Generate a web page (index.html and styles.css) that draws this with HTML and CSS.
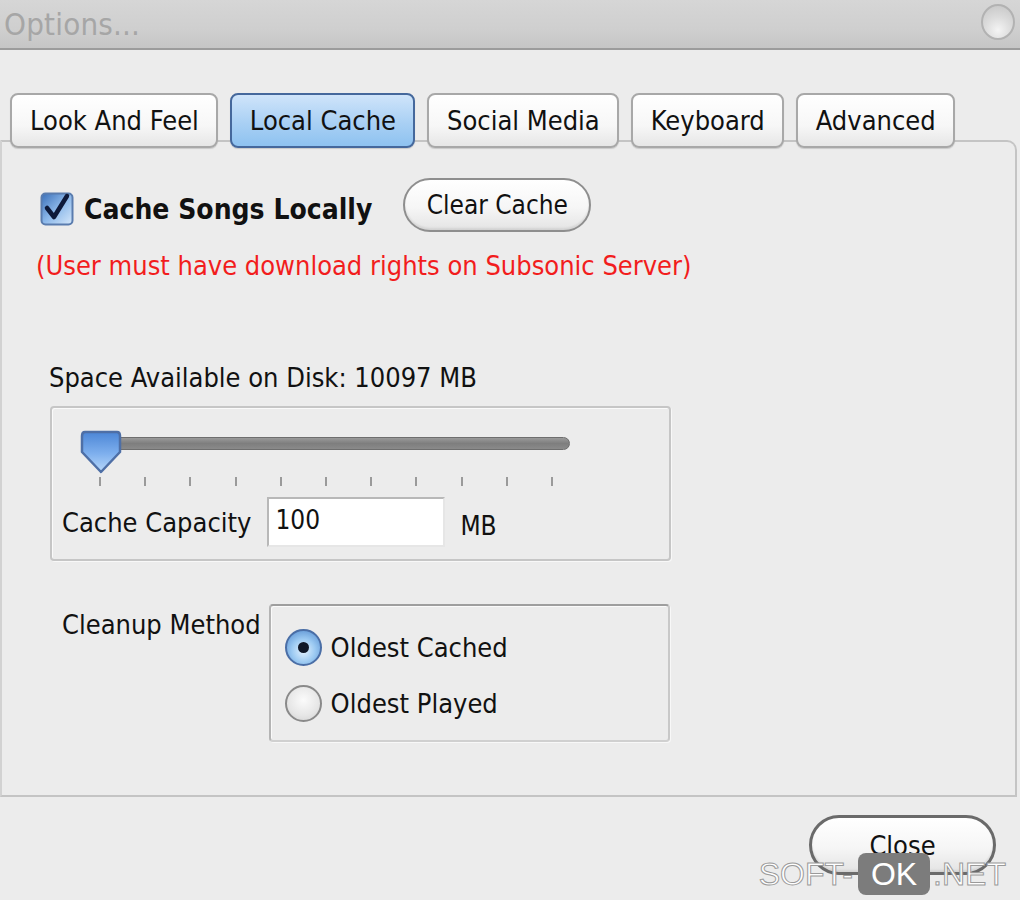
FILE: index.html
```html
<!DOCTYPE html>
<html>
<head>
<meta charset="utf-8">
<link rel="stylesheet" href="styles.css">
</head>
<body>
<div class="window">
  <div class="titlebar">
    <span class="title">Options...</span>
    <span class="orb"></span>
  </div>
  <div class="tabs">
    <div class="tab">Look And Feel</div>
    <div class="tab active">Local Cache</div>
    <div class="tab">Social Media</div>
    <div class="tab">Keyboard</div>
    <div class="tab">Advanced</div>
  </div>
  <div class="panel">
    <div class="cache-row">
      <span class="checkbox">
        <svg width="34" height="34" viewBox="0 0 34 34">
          <defs>
            <linearGradient id="cbg" x1="0" y1="0" x2="1" y2="1">
              <stop offset="0" stop-color="#3a6fb8"/>
              <stop offset="0.5" stop-color="#8cb8ea"/>
              <stop offset="1" stop-color="#d6e8fa"/>
            </linearGradient>
          </defs>
          <rect x="1.5" y="1.5" width="31" height="31" rx="4" fill="url(#cbg)" stroke="#5a7cae" stroke-width="2"/>
          <path d="M7 16 L14 25 L27 4" fill="none" stroke="#0e1a3a" stroke-width="4.5" stroke-linecap="round" stroke-linejoin="round"/>
        </svg>
      </span>
      <span class="cache-label">Cache Songs Locally</span>
      <button class="pill clear">Clear Cache</button>
    </div>
    <div class="warning">(User must have download rights on Subsonic Server)</div>

    <div class="space">Space Available on Disk: 10097 MB</div>
    <div class="box slider-box">
      <div class="slider">
        <div class="track"></div>
        <svg class="thumb" width="42" height="44" viewBox="0 0 42 44">
          <defs>
            <linearGradient id="tg" x1="0" y1="0" x2="0" y2="1">
              <stop offset="0" stop-color="#4c86d6"/>
              <stop offset="0.55" stop-color="#7fb0ee"/>
              <stop offset="1" stop-color="#b8d8fa"/>
            </linearGradient>
          </defs>
          <path d="M5 2 H37 Q40 2 40 6 V22 L21 42 L2 22 V6 Q2 2 5 2 Z" fill="url(#tg)" stroke="#4e6fa6" stroke-width="2.5" stroke-linejoin="round"/>
        </svg>
      </div>
      <div class="ticks">
        <i></i><i></i><i></i><i></i><i></i><i></i><i></i><i></i><i></i><i></i><i></i>
      </div>
      <div class="capacity-row">
        <span class="label">Cache Capacity</span>
        <span class="input">100</span>
        <span class="unit">MB</span>
      </div>
    </div>

    <div class="cleanup">
      <span class="label cleanup-label">Cleanup Method</span>
      <div class="box radio-box">
        <div class="radio-row">
          <span class="radio on"><span class="dot"></span></span>
          <span>Oldest Cached</span>
        </div>
        <div class="radio-row">
          <span class="radio"></span>
          <span>Oldest Played</span>
        </div>
      </div>
    </div>
  </div>
  <div class="footer">
    <button class="pill close">Close</button>
  </div>
  <div class="watermark"><span class="wm-t">SOFT-</span><span class="wm-ok">OK</span><span class="wm-t">.NET</span></div>
</div>
</body>
</html>
```
FILE: styles.css
```css
* { box-sizing: border-box; }
html, body { margin: 0; padding: 0; }
body {
  width: 1020px;
  height: 900px;
  overflow: hidden;
  background: #ececec;
  font-family: "DejaVu Sans Condensed", "DejaVu Sans", sans-serif;
  color: #111;
}
.window { position: relative; width: 1020px; height: 900px; }
.titlebar {
  height: 50px;
  background: linear-gradient(#d6d6d6, #cfcfcf 60%, #c6c6c6);
  border-bottom: 2px solid #9c9c9c;
  display: flex;
  align-items: center;
  justify-content: space-between;
  padding: 0 5px 0 4px;
}
.title {
  font-size: 31px;
  color: #a6a6a6;
  letter-spacing: 0.2px;
}
.orb {
  width: 34px;
  height: 36px;
  border-radius: 50%;
  border: 2px solid #b2b2b2;
  background: radial-gradient(circle at 50% 75%, #f4f4f4 0, #dcdcdc 45%, #c4c4c4 100%);
  margin-top: -4px;
}
.tabs {
  display: flex;
  gap: 12px;
  margin: 43px 0 0 10px;
  position: relative;
  z-index: 2;
}
.tab {
  height: 55px;
  padding: 0 17px 0 18px;
  display: flex;
  align-items: center;
  font-size: 27px;
  border: 2px solid #a8a8a8;
  border-radius: 8px;
  background: linear-gradient(#ffffff, #f7f7f7 60%, #e6e6e6);
  color: #111;
  box-shadow: 0 1px 1px rgba(0,0,0,0.15);
}
.tab.active {
  border-color: #45689c;
  background: linear-gradient(#cfe4fa, #a9d0f4 55%, #8ec2f0);
}
.panel {
  margin-top: -8px;
  width: 1017px;
  height: 657px;
  border: 2px solid #c4c4c4;
  border-left-color: #d2d2d2;
  border-radius: 0 10px 0 0;
  padding: 36px 0 0 38px;
}
.cache-row {
  display: flex;
  align-items: center;
  height: 54px;
}
.checkbox { display: flex; margin-top: 8px; }
.cache-label {
  font-weight: bold;
  font-size: 28px;
  margin: 8px 0 0 10px;
}
.pill {
  font-family: inherit;
  font-size: 26px;
  color: #111;
  background: linear-gradient(#ffffff, #f6f6f6 55%, #e4e4e4);
  border: 2px solid #8e8e8e;
  border-radius: 30px;
  padding: 0;
  box-shadow: inset 0 -2px 2px rgba(0,0,0,0.08);
}
.clear {
  width: 188px;
  height: 54px;
  margin-left: 31px;
}
.warning {
  color: #f21d1d;
  font-size: 27px;
  margin: 18px 0 0 -4px;
  height: 34px;
}
.space {
  font-size: 27px;
  margin: 78px 0 0 9px;
  height: 34px;
}
.box {
  border: 2px solid #c6c6c6;
  border-radius: 4px;
  box-shadow: inset 1px 1px 0 #fafafa, 1px 1px 0 #f8f8f8;
}
.slider-box {
  width: 621px;
  height: 155px;
  margin: 10px 0 0 10px;
  padding: 22px 0 0 28px;
}
.slider {
  position: relative;
  height: 44px;
  width: 494px;
}
.track {
  position: absolute;
  left: 16px;
  top: 7px;
  width: 474px;
  height: 13px;
  border-radius: 7px;
  background: linear-gradient(#9a9a9a, #7e7e7e 50%, #8a8a8a);
  border: 1px solid #6e6e6e;
}
.thumb { position: absolute; left: 0; top: 0; }
.ticks {
  display: flex;
  gap: 0;
  width: 500px;
  margin: 3px 0 0 19px;
  height: 12px;
}
.ticks i {
  display: block;
  width: 2px;
  height: 9px;
  background: #9a9a9a;
  margin-right: 43.2px;
}
.capacity-row {
  display: flex;
  align-items: center;
  margin: 8px 0 0 -18px;
  height: 50px;
}
.label { font-size: 27px; }
.input {
  width: 178px;
  height: 50px;
  margin-left: 16px;
  background: #fff;
  border: 2px solid #b8b8b8;
  border-right-color: #e6e6e6;
  border-bottom-color: #e6e6e6;
  font-size: 26px;
  padding: 6px 0 0 6px;
}
.unit { font-size: 26px; margin: 8px 0 0 15px; }
.cleanup {
  display: flex;
  margin: 43px 0 0 22px;
}
.cleanup-label { margin-top: 5px; }
.radio-box {
  width: 401px;
  height: 138px;
  margin-left: 8px;
  padding: 13px 0 0 14px;
  border-color: #9e9e9e #c8c8c8 #d0d0d0 #b4b4b4;
}
.radio-row {
  display: flex;
  align-items: center;
  height: 56px;
  font-size: 27px;
  gap: 9px;
}
.radio {
  width: 37px;
  height: 37px;
  border-radius: 50%;
  border: 2px solid #8a8a8a;
  background: radial-gradient(circle at 50% 40%, #fbfbfb, #e6e6e6 60%, #cfcfcf);
  display: flex;
  align-items: center;
  justify-content: center;
}
.radio.on {
  border-color: #4a6ea6;
  background: radial-gradient(circle at 50% 60%, #e4f2ff 0, #9ccaf2 45%, #4d86cc 100%);
}
.dot {
  width: 11px;
  height: 11px;
  border-radius: 50%;
  background: #101828;
}
.footer {
  display: flex;
  justify-content: flex-end;
  padding: 18px 24px 0 0;
}
.close {
  width: 187px;
  height: 60px;
  border-width: 3px;
  border-color: #6a6a6a;
  font-size: 27px;
}
.watermark {
  position: absolute;
  right: 14px;
  bottom: 5px;
  display: flex;
  align-items: center;
  font-family: "Liberation Sans", Arial, sans-serif;
  font-size: 32px;
}
.wm-t {
  color: #fff;
  -webkit-text-stroke: 1px #9a9a9a;
}
.wm-ok {
  background: #7c7c7c;
  color: #fff;
  border-radius: 8px;
  padding: 0 13px;
  height: 42px;
  line-height: 42px;
  margin: 0 3px 0 5px;
}
```
